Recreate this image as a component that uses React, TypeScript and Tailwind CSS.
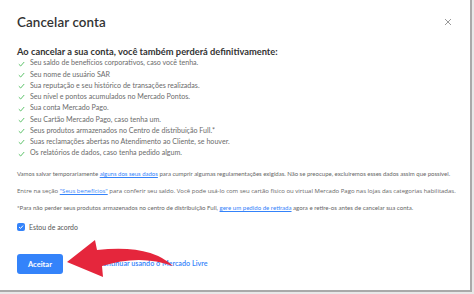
import React from 'react';

const items = [
  'Seu saldo de benefícios corporativos, caso você tenha.',
  'Seu nome de usuário SAR',
  'Sua reputação e seu histórico de transações realizadas.',
  'Seu nível e pontos acumulados no Mercado Pontos.',
  'Sua conta Mercado Pago.',
  'Seu Cartão Mercado Pago, caso tenha um.',
  'Seus produtos armazenados no Centro de distribuição Full.*',
  'Suas reclamações abertas no Atendimento ao Cliente, se houver.',
  'Os relatórios de dados, caso tenha pedido algum.',
];

const Check = () => (
  <svg width="7" height="6" viewBox="0 0 7 6" className="shrink-0">
    <path d="M0.8 3.2 L2.7 5 L6.2 1" fill="none" stroke="#4cbb5a" strokeWidth="0.9" />
  </svg>
);

const App = () => {
  return (
    <div
      className="w-[474px] h-[294px] bg-[#e8e8e8] overflow-hidden"
      style={{ fontFamily: 'Lato, "Open Sans", Arial, sans-serif' }}
    >
      <div className="relative w-[472px] h-[292px] bg-white border-r-2 border-b-2 border-[#a9a9a9] pl-[17px] flex flex-col">
        {/* header */}
        <div className="h-[44px] flex items-center justify-between pr-[18px]">
          <h1 className="text-[13.4px] font-semibold text-[#333] tracking-[0.1px]">Cancelar conta</h1>
          <svg width="8" height="8" viewBox="0 0 8 8">
            <path d="M1 1 L7 7 M7 1 L1 7" stroke="#9a9a9a" strokeWidth="1" />
          </svg>
        </div>

        <p className="mt-[1px] text-[9.3px] leading-[13px] font-bold text-[#333]">
          Ao cancelar a sua conta, você também perderá definitivamente:
        </p>

        <ul className="flex flex-col">
          {items.map((t) => (
            <li key={t} className="h-[11.25px] flex items-center gap-[5px] pl-[1px] text-[7.1px] text-[#6b6b6b]">
              <Check />
              <span>{t}</span>
            </li>
          ))}
        </ul>

        <div className="flex flex-col gap-[7px] mt-[10px] leading-[10px] text-[#666] whitespace-nowrap">
          <p className="text-[6px]">
            Vamos salvar temporariamente{' '}
            <span className="text-[#3483fa] underline">alguns dos seus dados</span> para cumprir algumas
            regulamentações exigidas. Não se preocupe, excluiremos esses dados assim que possível.
          </p>
          <p className="text-[6px] font-['Open_Sans',sans-serif]">
            Entre na seção <span className="text-[#3483fa] underline">"Seus benefícios"</span> para conferir seu
            saldo. Você pode usá-lo com seu cartão físico ou virtual Mercado Pago nas lojas das categorias
            habilitadas.
          </p>
          <p className="text-[6.1px]">
            *Para não perder seus produtos armazenados no centro de distribuição Full,{' '}
            <span className="text-[#3483fa] underline">gere um pedido de retirada</span> agora e retire-os antes
            de cancelar sua conta.
          </p>
        </div>

        <label className="mt-[7px] h-[14px] flex items-center gap-[4px] text-[6.9px] text-[#555]">
          <span className="w-[8px] h-[8px] rounded-[2px] bg-[#3483fa] flex items-center justify-center">
            <svg width="6" height="6" viewBox="0 0 6 6">
              <path d="M1 3 L2.5 4.4 L5 1.6" fill="none" stroke="white" strokeWidth="1" />
            </svg>
          </span>
          Estou de acordo
        </label>

        <div className="mt-[20px] flex items-center">
          <button className="w-[46px] h-[20px] rounded-[3px] bg-[#3483fa] text-white text-[7.5px] font-bold">
            Aceitar
          </button>
          <span className="ml-[35px] text-[7.2px] font-semibold text-[#3483fa]">Continuar usando o Mercado Livre</span>
        </div>

        {/* red annotation arrow */}
        <svg className="absolute left-0 top-0 pointer-events-none" width="472" height="292" viewBox="0 0 472 292">
          <path
            d="M67 262 L95 240 L97 250 Q150 244 173 266 Q140 254 102 266 L103 277 Z"
            fill="#e5263c"
          />
        </svg>
      </div>
    </div>
  );
};

export default App;
